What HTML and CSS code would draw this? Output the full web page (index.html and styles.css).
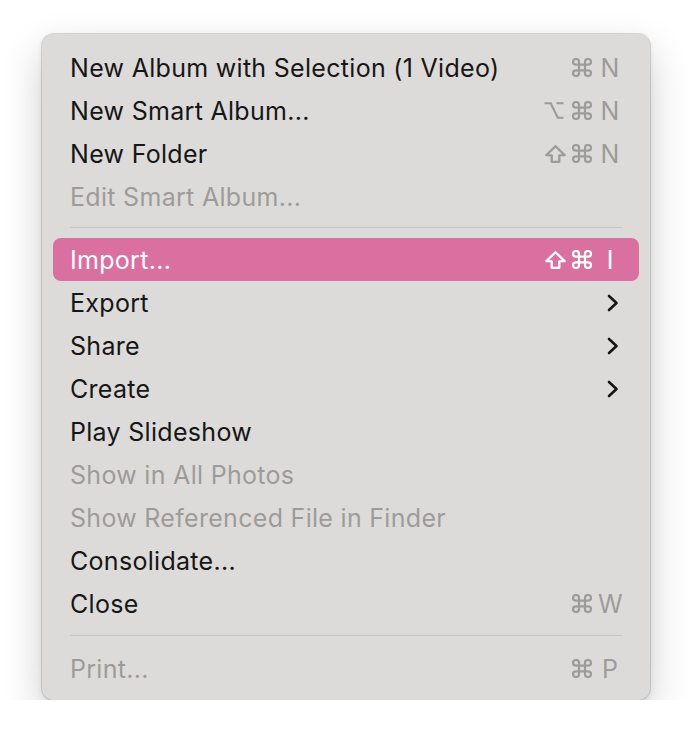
FILE: index.html
```html
<!DOCTYPE html>
<html>
<head>
<meta charset="utf-8">
<link rel="stylesheet" href="styles.css">
</head>
<body>
<svg width="0" height="0" class="defs">
  <defs>
    <symbol id="cmd" viewBox="2 2 20 20" preserveAspectRatio="none"><path d="M15 6v12a3 3 0 1 0 3-3H6a3 3 0 1 0 3 3V6a3 3 0 1 0-3 3h12a3 3 0 1 0-3-3" fill="none" stroke="currentColor" stroke-width="2.2" stroke-linejoin="round"/></symbol>
    <symbol id="opt" viewBox="1.5 3.2 21 17.6" preserveAspectRatio="none"><path d="M2 4.5h6.5l7.5 15h6M14.5 4.5h7.5" fill="none" stroke="currentColor" stroke-width="2.3"/></symbol>
    <symbol id="shift" viewBox="2.3 2.8 19.4 18.9" preserveAspectRatio="none"><path d="M8.5 20.5v-7H3.5L12 4l8.5 9.5h-5v7z" fill="none" stroke="currentColor" stroke-width="2.2" stroke-linejoin="round"/></symbol>
    <symbol id="chev" viewBox="0 0 12 18"><path d="M2 2l7.5 7L2 16" fill="none" stroke="currentColor" stroke-width="2.6" stroke-linecap="round" stroke-linejoin="round"/></symbol>
  </defs>
</svg>
<div class="menu">
  <div class="item"><span class="label">New Album with Selection (1 Video)</span><span class="keys"><svg class="mod cmdk"><use href="#cmd"/></svg><span class="key">N</span></span></div>
  <div class="item"><span class="label">New Smart Album...</span><span class="keys"><svg class="mod optk"><use href="#opt"/></svg><svg class="mod cmdk"><use href="#cmd"/></svg><span class="key">N</span></span></div>
  <div class="item"><span class="label">New Folder</span><span class="keys"><svg class="mod shiftk"><use href="#shift"/></svg><svg class="mod cmdk"><use href="#cmd"/></svg><span class="key">N</span></span></div>
  <div class="item disabled"><span class="label">Edit Smart Album...</span></div>
  <div class="sep"></div>
  <div class="item active"><span class="label">Import...</span><span class="keys"><svg class="mod shiftk"><use href="#shift"/></svg><svg class="mod cmdk"><use href="#cmd"/></svg><span class="key">I</span></span></div>
  <div class="item"><span class="label">Export</span><svg class="chev"><use href="#chev"/></svg></div>
  <div class="item"><span class="label">Share</span><svg class="chev"><use href="#chev"/></svg></div>
  <div class="item"><span class="label">Create</span><svg class="chev"><use href="#chev"/></svg></div>
  <div class="item"><span class="label">Play Slideshow</span></div>
  <div class="item disabled"><span class="label">Show in All Photos</span></div>
  <div class="item disabled"><span class="label">Show Referenced File in Finder</span></div>
  <div class="item"><span class="label">Consolidate...</span></div>
  <div class="item"><span class="label">Close</span><span class="keys"><svg class="mod cmdk"><use href="#cmd"/></svg><span class="key">W</span></span></div>
  <div class="sep sep2"></div>
  <div class="item disabled"><span class="label">Print...</span><span class="keys"><svg class="mod cmdk"><use href="#cmd"/></svg><span class="key">P</span></span></div>
</div>
</body>
</html>
```
FILE: styles.css
```css
html, body {
  margin: 0;
  padding: 0;
  background: #ffffff;
}
body {
  padding: 34px 0 0 42px;
  font-family: Inter, "Noto Sans", "Liberation Sans", sans-serif;
}
.defs {
  position: absolute;
  width: 0;
  height: 0;
}
.menu {
  width: 608px;
  height: 666px;
  box-sizing: border-box;
  padding: 12px 11px 10px 11px;
  background: #dddbda;
  border-radius: 12px;
  box-shadow: 0 0 0 1px rgba(0,0,0,0.13), 0 16px 40px rgba(0,0,0,0.2), 0 2px 6px rgba(0,0,0,0.08);
  display: flex;
  flex-direction: column;
}
.item {
  height: 43px;
  display: flex;
  align-items: center;
  justify-content: space-between;
  padding: 0 17px;
  border-radius: 8px;
  color: #161616;
  font-size: 25px;
  letter-spacing: 0.3px;
  flex-shrink: 0;
}
.item.disabled {
  color: #9d9b9a;
}
.item.active {
  background: #da70a0;
  color: #ffffff;
}
.keys {
  display: flex;
  align-items: center;
  color: #9d9b9a;
}
.item.active .keys {
  color: #ffffff;
}
.mod {
  margin-right: 6px;
}
.cmdk {
  width: 20px;
  height: 19px;
}
.shiftk {
  width: 21px;
  height: 18px;
}
.optk {
  width: 20px;
  height: 17px;
  margin-right: 8px;
}
.key {
  width: 24px;
  text-align: center;
  font-size: 25px;
  letter-spacing: 0;
}
.chev {
  width: 12px;
  height: 18px;
  color: #161616;
  margin-right: 3px;
}
.sep {
  height: 1px;
  background: #c6c4c3;
  margin: 9px 17px 10px;
  flex-shrink: 0;
}
.sep2 {
  margin: 10px 17px 11px;
}
```
